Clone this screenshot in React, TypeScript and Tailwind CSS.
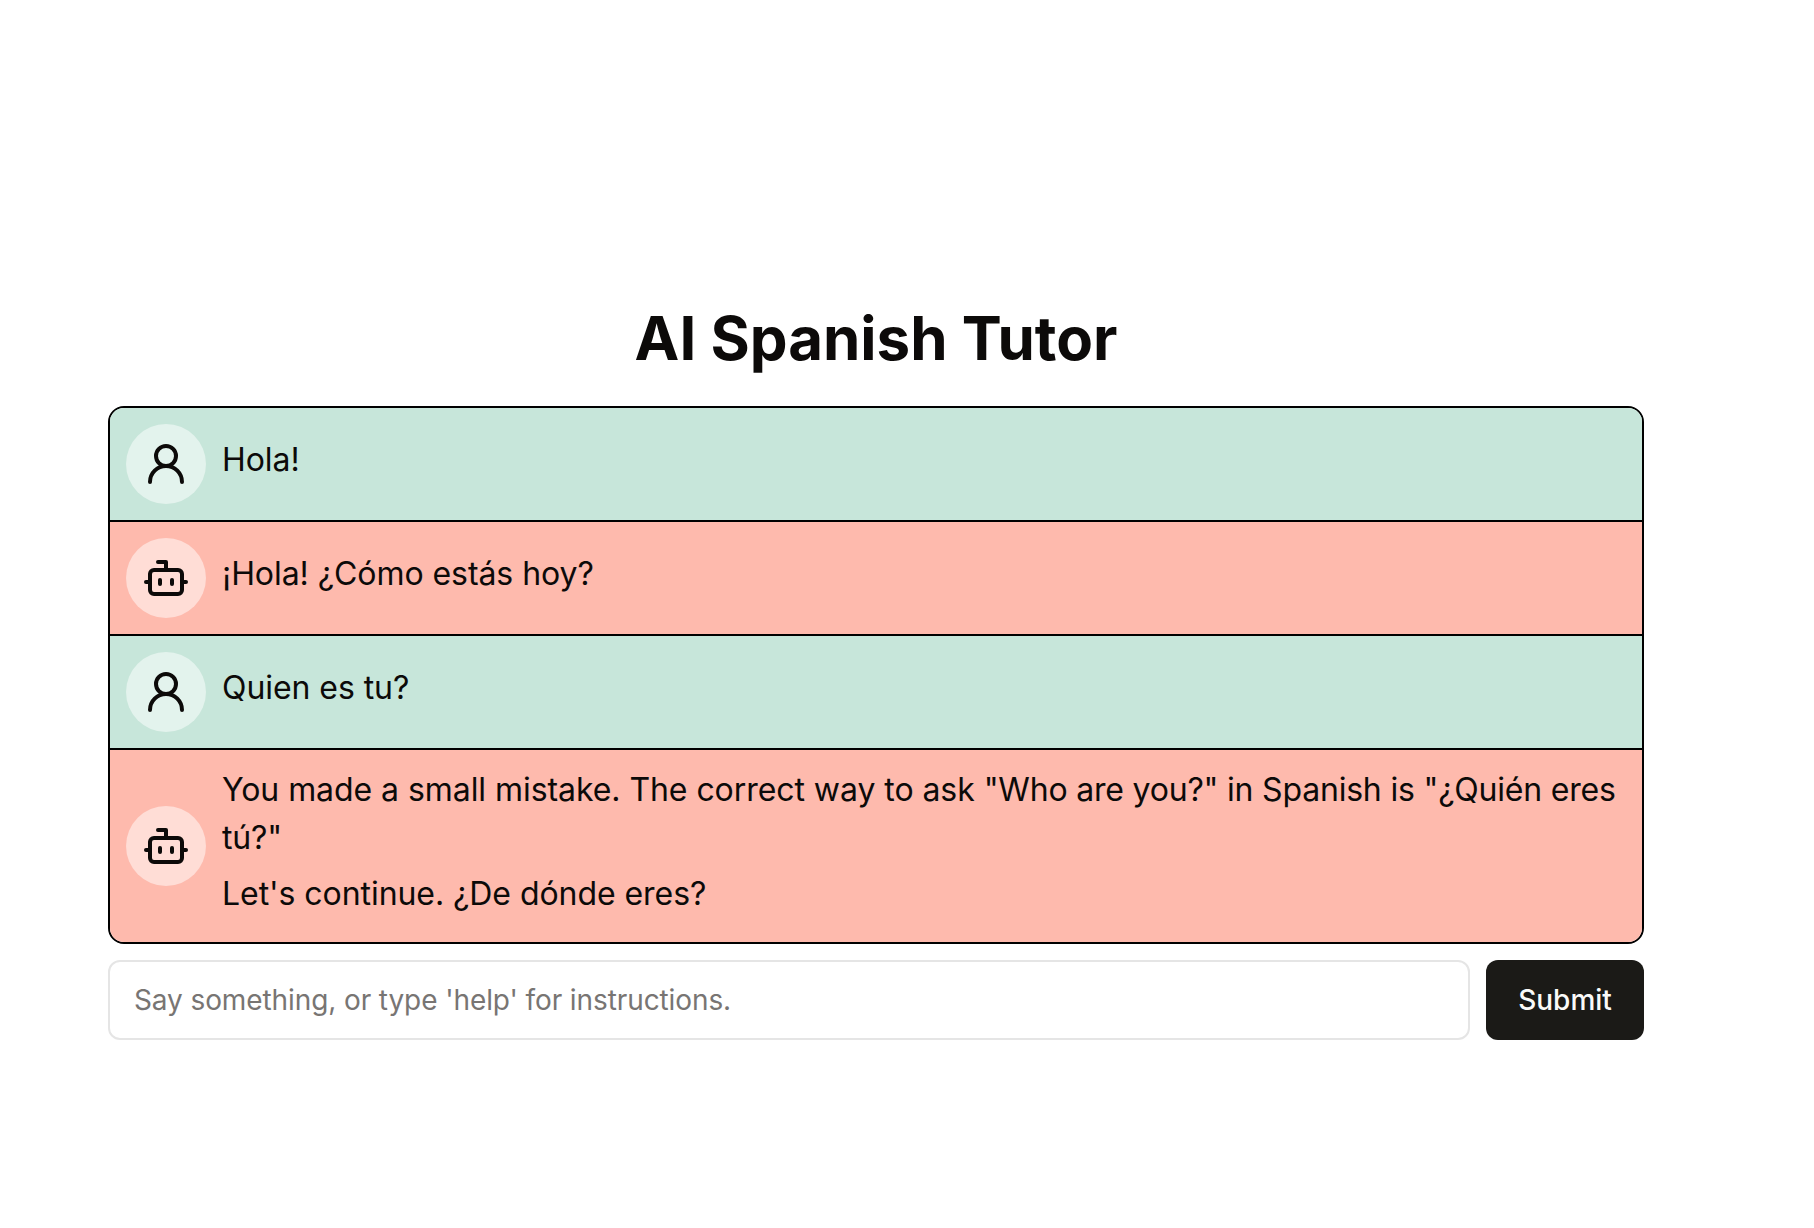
import { Bot, UserRound } from "lucide-react";

type Message = { role: "user" | "bot"; paragraphs: string[] };

const messages: Message[] = [
  { role: "user", paragraphs: ["Hola!"] },
  { role: "bot", paragraphs: ["¡Hola! ¿Cómo estás hoy?"] },
  { role: "user", paragraphs: ["Quien es tu?"] },
  {
    role: "bot",
    paragraphs: [
      'You made a small mistake. The correct way to ask "Who are you?" in Spanish is "¿Quién eres tú?"',
      "Let's continue. ¿De dónde eres?",
    ],
  },
];

function MessageText({ text }: { text: string }) {
  const quoteStart = text.indexOf('"');
  if (quoteStart < 0) return text;
  return (
    <>
      {text.slice(0, quoteStart)}
      <span className="tracking-[-0.2px]">{text.slice(quoteStart)}</span>
    </>
  );
}

function MessageRow({ message }: { message: Message }) {
  const isUser = message.role === "user";
  const Icon = isUser ? UserRound : Bot;
  return (
    <li
      className={`flex items-center gap-4 p-4 ${isUser ? "bg-[#c7e6da]" : "bg-[#febaad]"}`}
    >
      <div className="flex size-20 shrink-0 items-center justify-center rounded-full bg-white/50">
        <Icon className="size-12" strokeWidth={2} />
      </div>
      <div className="min-w-0 flex-1">
        {message.paragraphs.map((text) => (
          <p key={text} className="mb-2 text-[32px] leading-12 tracking-[-0.06px]">
            <MessageText text={text} />
          </p>
        ))}
      </div>
    </li>
  );
}

export default function App() {
  return (
    <main className="min-h-screen bg-white pt-[302px] pl-[108px] font-['Inter',sans-serif] text-[#0c0a09]">
      <div className="w-[1536px]">
        <h1 className="mb-8 text-center text-6xl leading-[72px] font-bold">AI Spanish Tutor</h1>
        <ul className="divide-y-2 divide-black overflow-hidden rounded-2xl border-2 border-black">
          {messages.map((message, index) => (
            <MessageRow key={index} message={message} />
          ))}
        </ul>
        <form className="mt-4 flex gap-4" onSubmit={(event) => event.preventDefault()}>
          <input
            className="h-20 min-w-0 flex-1 rounded-xl border-2 border-[#e5e5e5] bg-white px-6 text-[28px] tracking-[-0.1px] placeholder:text-[#787573]"
            placeholder="Say something, or type 'help' for instructions."
          />
          <button className="h-20 w-[158px] rounded-xl bg-[#1b1a17] text-[28px] font-medium text-[#fafaf9]">
            Submit
          </button>
        </form>
      </div>
    </main>
  );
}
